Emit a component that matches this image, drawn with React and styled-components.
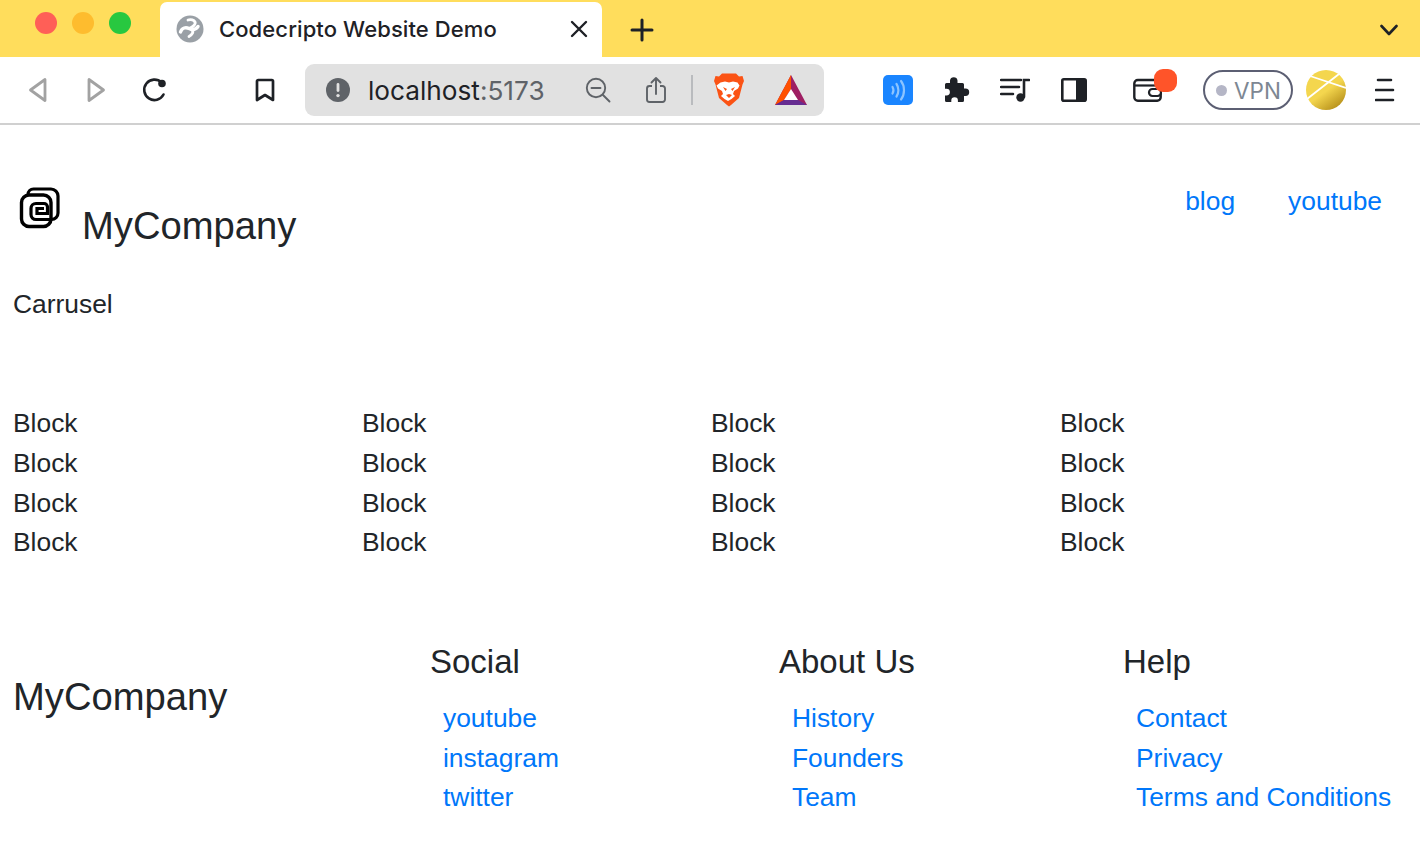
import React from 'react';
import styled, { createGlobalStyle } from 'styled-components';

const GlobalStyle = createGlobalStyle`
  html, body { margin: 0; padding: 0; background: #fff; }
  body { font-family: "Liberation Sans", Arial, sans-serif; color: #212529; overflow: hidden; }
  * { box-sizing: border-box; }
  svg { flex-shrink: 0; }
`;

const TabStrip = styled.div`
  height: 57px;
  background: #ffdd5c;
  display: flex;
  align-items: flex-end;
  padding-right: 22px;
`;

const Lights = styled.div`
  width: 160px;
  height: 100%;
  padding: 12px 0 0 35px;
  display: flex;
  gap: 15px;
`;

const Light = styled.span`
  width: 22px;
  height: 22px;
  border-radius: 50%;
  background: ${p => p.$color};
`;

const Tab = styled.div`
  width: 442px;
  height: 55px;
  background: #fff;
  border-radius: 7px 7px 0 0;
  display: flex;
  align-items: center;
  padding: 0 14px 1px 16px;
  font: 500 22px Inter, sans-serif;
  letter-spacing: 0.1px;
  color: #1e2126;
`;

const TabTitle = styled.span`
  flex: 1;
  margin-left: 15px;
`;

const NewTab = styled.div`
  margin: 0 0 15px 28px;
  display: flex;
`;

const ChevronBox = styled.div`
  margin: 0 0 21px auto;
  display: flex;
`;

const Toolbar = styled.div`
  height: 68px;
  border-bottom: 2px solid #d0d0d0;
  display: flex;
  align-items: center;
  padding: 0 22px 0 26px;
`;

const NavButton = styled.div`
  display: flex;
  margin-left: ${p => p.$gap || 0}px;
`;

const AddressBar = styled.div`
  width: 519px;
  height: 52px;
  margin-left: 28px;
  background: #e1e1e1;
  border-radius: 9px;
  display: flex;
  align-items: center;
  padding: 0 0 0 20px;
`;

const Url = styled.div`
  margin-left: 17px;
  width: 190px;
  font: 400 26.2px Inter, sans-serif;
  color: #1e2126;
  white-space: nowrap;
`;

const Port = styled.span`
  color: #5f6368;
`;

const BarDivider = styled.span`
  width: 2px;
  height: 30px;
  background: #b9bbbe;
  margin: 0 21px;
`;

const WalletWrap = styled.div`
  position: relative;
  display: flex;
  margin-left: 46px;
`;

const Badge = styled.span`
  position: absolute;
  left: 21px;
  top: -9px;
  width: 23px;
  height: 23px;
  border-radius: 9px;
  background: #ff5429;
`;

const VpnPill = styled.div`
  width: 90px;
  height: 40px;
  margin-left: 41px;
  border: 2px solid #5c5f73;
  border-radius: 20px;
  display: flex;
  align-items: center;
  padding-left: 11px;
  gap: 7px;
  font: 400 22.5px Inter, sans-serif;
  color: #7d8793;
`;

const VpnDot = styled.span`
  width: 11px;
  height: 11px;
  border-radius: 50%;
  background: #b5b6c6;
`;

const Page = styled.div`
  padding: 0 13px;
  font-size: 26.4px;
  line-height: 39px;
  color: #212529;
`;

const Header = styled.header`
  display: flex;
  justify-content: space-between;
  padding-top: 55px;
  height: 152px;
`;

const Brand = styled.div`
  display: flex;
  padding-left: 5px;
`;

const LogoBox = styled.div`
  display: flex;
  margin-top: 7px;
`;

const BrandName = styled.div`
  font-size: 38.2px;
  line-height: 47px;
  margin: 22px 0 0 22px;
`;

const HeaderNav = styled.nav`
  display: flex;
  gap: 53px;
  padding: 2px 25px 0 0;
`;

const Link = styled.a`
  color: #0077fa;
  text-decoration: none;
  display: block;
`;

const Carousel = styled.div`
  height: 127px;
  padding-top: 8px;
`;

const BlockGrid = styled.div`
  display: grid;
  grid-template-columns: repeat(4, 349px);
  grid-auto-rows: 39.8px;
`;

const Footer = styled.footer`
  display: flex;
  margin-top: 78px;
`;

const FooterBrand = styled.div`
  width: 417px;
  padding-top: 32px;
  font-size: 38.2px;
  line-height: 47px;
`;

const FooterCol = styled.div`
  width: ${p => p.$width}px;
`;

const FooterTitle = styled.div`
  font-size: 33px;
  line-height: 41px;
  margin-bottom: 17px;
`;

const FooterList = styled.div`
  padding-left: 13px;
  white-space: nowrap;
  line-height: 39.5px;
`;

const Svg = ({ size = 28, h, children, ...rest }) => (
  <svg width={size} height={h || size} viewBox={`0 0 ${size} ${h || size}`} fill="none" {...rest}>{children}</svg>
);

const Globe = () => (
  <Svg size={28}>
    <circle cx="14" cy="14" r="13.500" fill="#9aa0a6" />
    <path d="M4.500 17C6 12.500 10 12 13 13.500s6.500 1.500 9-2" stroke="#fff" strokeWidth="3.400" strokeLinecap="round" />
    <path d="M12 5c3-1 6 0 7 2s-2 5-6 6.500M16 15c2 2 0 5-3 6.500" stroke="#fff" strokeWidth="2.800" strokeLinecap="round" />
  </Svg>
);

const Tri = ({ flip }) => (
  <Svg size={24}>
    <path d={flip ? 'M5 1.500v21L19.500 12z' : 'M19 1.500v21L4.500 12z'} stroke="#a2a2a2" strokeWidth="2.800" strokeLinejoin="round" />
  </Svg>
);

const Reload = () => (
  <Svg size={28}>
    <path d="M22.500 18.500A10.200 10.200 0 1 1 20.500 6.500" stroke="#1e2126" strokeWidth="2.600" strokeLinecap="round" />
    <circle cx="21" cy="7.500" r="3.800" fill="#1e2126" />
  </Svg>
);

const Bookmark = () => (
  <Svg size={24}>
    <path d="M4 3.200c0-.7.5-1.200 1.200-1.200h13.600c.7 0 1.200.5 1.200 1.200V22l-8-5-8 5z" stroke="#1e2126" strokeWidth="2.700" strokeLinejoin="round" />
  </Svg>
);

const Alert = () => (
  <Svg size={26}>
    <circle cx="13" cy="13" r="12" fill="#5f6368" />
    <rect x="11.600" y="6" width="2.800" height="9" rx="1.400" fill="#e1e1e1" />
    <circle cx="13" cy="18.600" r="1.700" fill="#e1e1e1" />
  </Svg>
);

const ZoomOut = () => (
  <Svg size={26}>
    <circle cx="11" cy="11" r="9.200" stroke="#5f6368" strokeWidth="1.900" />
    <path d="M6.500 11h9M18 18l6.500 6.500" stroke="#5f6368" strokeWidth="1.900" strokeLinecap="round" />
  </Svg>
);

const Share = () => (
  <Svg size={26} h={30}>
    <path d="M8 11H5.500A2.500 2.500 0 0 0 3 13.500v11A2.500 2.500 0 0 0 5.500 27h13a2.500 2.500 0 0 0 2.500-2.500v-11a2.500 2.500 0 0 0-2.500-2.500H16" stroke="#5f6368" strokeWidth="1.900" />
    <path d="M12 19V3M7.500 7.500 12 3l4.500 4.500" stroke="#5f6368" strokeWidth="1.900" strokeLinecap="round" strokeLinejoin="round" />
  </Svg>
);

const BraveLion = () => (
  <Svg size={30} h={34}>
    <path d="M8 .5h14l3 3 3.500-.5L30 8l-1.500 3.500L25 25l-8 7-2 1.500-2-1.500-8-7L1.500 11.500 0 8l1.500-5L5 3.500z" fill="#fb5315" />
    <path d="M6.500 9.500 11 8.500l4 1 4-1 4.500 1 2 3-1.500 3-4 2.500-1 3 2 2-3.500 3-3.500 2-3.500-2-3.500-3 2-2-1-3-4-2.500-1.500-3z" fill="#fff" />
    <path d="M9 14l4 2-1.500 2zM21 14l-4 2 1.500 2zM12 22l3-1 3 1-3 3z" fill="#fb5315" />
  </Svg>
);

const BatLogo = () => (
  <Svg size={32} h={30}>
    <path d="M16 0 32 30H0z" fill="#9e1f63" />
    <path d="M16 0 0 30l9-5 7-11z" fill="#ff5000" />
    <path d="M0 30h32l-9-5H9z" fill="#662d91" />
    <path d="M16 14l7 11H9z" fill="#fff" />
  </Svg>
);

const WaveTile = () => (
  <Svg size={30}>
    <rect width="30" height="30" rx="5" fill="#1a85ff" />
    <path d="M9.500 12c1.200 2 1.200 4.500 0 6.500" stroke="#8cc4ff" strokeWidth="2.200" strokeLinecap="round" />
    <path d="M13.500 9c2.500 3.500 2.500 9 0 12.500" stroke="#8cc4ff" strokeWidth="2.200" strokeLinecap="round" />
    <path d="M18 6c4 5 4 13.500 0 18.500" stroke="#8cc4ff" strokeWidth="2.200" strokeLinecap="round" />
  </Svg>
);

const Puzzle = () => (
  <Svg size={28}>
    <path d="M10 5.500a3.800 3.800 0 0 1 7.500 0V8h5a1.500 1.500 0 0 1 1.500 1.500v4h1.500a3.700 3.700 0 0 1 0 7.400H24v4.600a1.500 1.500 0 0 1-1.500 1.500h-4.600v-1.500a3.300 3.300 0 0 0-6.600 0V27H6.500A1.500 1.500 0 0 1 5 25.500v-5h1.500a3.400 3.400 0 0 0 0-6.800H5V9.500A1.500 1.500 0 0 1 6.500 8H10z" fill="#1e2126" transform="translate(-3 -1)" />
  </Svg>
);

const Playlist = () => (
  <Svg size={30} h={26}>
    <path d="M1 3h20M1 10h18M1 17h12" stroke="#1e2126" strokeWidth="2.500" strokeLinecap="round" />
    <path d="M24 20V3h5" stroke="#1e2126" strokeWidth="2.600" strokeLinecap="round" />
    <circle cx="20.500" cy="20.500" r="4.200" fill="#1e2126" />
  </Svg>
);

const SidePanel = () => (
  <Svg size={26} h={24}>
    <rect x="1.300" y="1.300" width="23.400" height="21.400" rx="1.500" stroke="#1e2126" strokeWidth="2.600" />
    <rect x="15" y="1.300" width="9.700" height="21.400" fill="#1e2126" />
  </Svg>
);

const Wallet = () => (
  <Svg size={29} h={24}>
    <rect x="1.300" y="2" width="26.400" height="20.700" rx="3.500" stroke="#1e2126" strokeWidth="2.400" />
    <path d="M1.500 7.500h26" stroke="#1e2126" strokeWidth="2.200" />
    <rect x="16" y="11" width="12" height="7" rx="3.500" fill="#fff" stroke="#1e2126" strokeWidth="2.200" />
  </Svg>
);

const Avatar = () => (
  <Svg size={40}>
    <defs>
      <linearGradient id="avatarFill" x1="0.300" y1="0.300" x2="0.800" y2="1">
        <stop offset="0.350" stopColor="#f4d64e" />
        <stop offset="1" stopColor="#b18a16" />
      </linearGradient>
    </defs>
    <circle cx="20" cy="20" r="20" fill="url(#avatarFill)" />
    <path d="M4 6l36 12M1 29 33 4" stroke="#fff" strokeWidth="1.800" />
  </Svg>
);

const Burger = () => (
  <Svg size={20} h={26}>
    <path d="M3 3h13M1 13h17M1 23h17" stroke="#1e2126" strokeWidth="2.600" strokeLinecap="round" />
  </Svg>
);

// back and front squares; the back one's outline runs on into the inner spiral
const Logo = () => (
  <Svg size={42}>
    <rect x="3.500" y="8" width="29.500" height="31.500" rx="7.500" stroke="#000" strokeWidth="3.400" />
    <path d="M10 8V7.500A5.500 5.500 0 0 1 15.500 2H33A7 7 0 0 1 40 9V26A6.500 6.500 0 0 1 33.500 32.500H18A5 5 0 0 1 13 27.500V21.500A5 5 0 0 1 18 16.500H26A3.500 3.500 0 0 1 29.500 20V26.500H19V21.500H26" stroke="#000" strokeWidth="3.200" />
  </Svg>
);

const footerCols = [
  { title: 'Social', width: 349, links: ['youtube', 'instagram', 'twitter'] },
  { title: 'About Us', width: 344, links: ['History', 'Founders', 'Team'] },
  { title: 'Help', width: 280, links: ['Contact', 'Privacy', 'Terms and Conditions'] },
];

const App = () => (
  <>
    <GlobalStyle />
    <TabStrip>
      <Lights>
        <Light $color="#ff5f57" />
        <Light $color="#febc2e" />
        <Light $color="#28c840" />
      </Lights>
      <Tab>
        <Globe />
        <TabTitle>Codecripto Website Demo</TabTitle>
        <Svg size={18}><path d="M2 2l14 14M16 2 2 16" stroke="#1e2126" strokeWidth="2.400" strokeLinecap="round" /></Svg>
      </Tab>
      <NewTab>
        <Svg size={24}><path d="M12 2v20M2 12h20" stroke="#1e2126" strokeWidth="3" strokeLinecap="round" /></Svg>
      </NewTab>
      <ChevronBox>
        <Svg size={18} h={12}><path d="M1.500 2 9 10l7.500-8" stroke="#1e2126" strokeWidth="2.600" strokeLinecap="round" strokeLinejoin="round" /></Svg>
      </ChevronBox>
    </TabStrip>
    <Toolbar>
      <NavButton><Tri /></NavButton>
      <NavButton $gap={34}><Tri flip /></NavButton>
      <NavButton $gap={33}><Reload /></NavButton>
      <NavButton $gap={84}><Bookmark /></NavButton>
      <AddressBar>
        <Alert />
        <Url>localhost<Port>:5173</Port></Url>
        <NavButton $gap={27}><ZoomOut /></NavButton>
        <NavButton $gap={33}><Share /></NavButton>
        <BarDivider />
        <BraveLion />
        <NavButton $gap={31}><BatLogo /></NavButton>
      </AddressBar>
      <NavButton $gap={59}><WaveTile /></NavButton>
      <NavButton $gap={30}><Puzzle /></NavButton>
      <NavButton $gap={29}><Playlist /></NavButton>
      <NavButton $gap={31}><SidePanel /></NavButton>
      <WalletWrap>
        <Wallet />
        <Badge />
      </WalletWrap>
      <VpnPill><VpnDot />VPN</VpnPill>
      <NavButton $gap={13}><Avatar /></NavButton>
      <NavButton $gap={29}><Burger /></NavButton>
    </Toolbar>
    <Page>
      <Header>
        <Brand>
          <LogoBox><Logo /></LogoBox>
          <BrandName>MyCompany</BrandName>
        </Brand>
        <HeaderNav>
          <Link>blog</Link>
          <Link>youtube</Link>
        </HeaderNav>
      </Header>
      <Carousel>Carrusel</Carousel>
      <BlockGrid>
        {Array.from({ length: 16 }, (_, i) => <div key={i}>Block</div>)}
      </BlockGrid>
      <Footer>
        <FooterBrand>MyCompany</FooterBrand>
        {footerCols.map(col => (
          <FooterCol key={col.title} $width={col.width}>
            <FooterTitle>{col.title}</FooterTitle>
            <FooterList>
              {col.links.map(l => <Link key={l}>{l}</Link>)}
            </FooterList>
          </FooterCol>
        ))}
      </Footer>
    </Page>
  </>
);

export default App;
